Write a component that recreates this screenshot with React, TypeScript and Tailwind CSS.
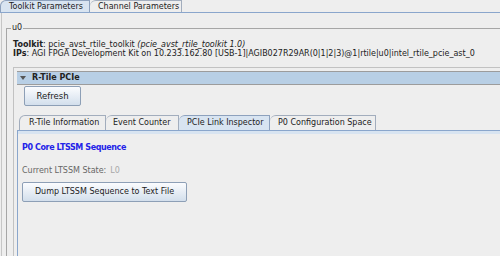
export default function App() {
  return (
    <div className="w-[500px] h-[256px] overflow-hidden bg-[#eeeeee] text-[8px] leading-[10px] text-[#333333] font-['DejaVu_Sans',sans-serif]">
      {/* Top tabs */}
      <div className="flex h-[12px] items-end">
        <div className="h-[12px] w-[90px] flex items-center pl-[8px] whitespace-nowrap bg-[#d8e4f1] border border-b-0 border-[#8da1bd] rounded-tl-[6px] text-[#222222]">
          Toolkit Parameters
        </div>
        <div className="h-[12px] w-[92px] flex items-center pl-[8px] whitespace-nowrap bg-[#eeeeee] border border-b-0 border-l-0 border-[#a2adbd] rounded-tl-[6px] text-[#222222]">
          Channel Parameters
        </div>
      </div>

      {/* Outer tab pane */}
      <div className="w-[540px] h-[244px] border-t border-[#8aa6cc] pl-[1px]">
        <div className="h-full border-l border-[#c6c6c6] pl-[4px] pt-[10px]">
          <fieldset className="w-[520px] h-[240px] border border-[#a6a6a6] pl-[6px]">
            <legend className="-ml-[2px] px-[1px] text-[#222222] leading-[10px]">u0</legend>

            <div className="mt-[7px] text-[#222222] leading-[9px]">
              <div className="whitespace-nowrap">
                <span className="font-bold">Toolkit</span>: pcie_avst_rtile_toolkit{" "}
                <span className="italic">(pcie_avst_rtile_toolkit 1.0)</span>
              </div>
              <div className="whitespace-nowrap">
                <span className="font-bold">IPs</span>: AGI FPGA Development Kit on 10.233.162.80
                [USB-1]|AGIB027R29AR(0|1|2|3)@1|rtile|u0|intel_rtile_pcie_ast_0
              </div>
            </div>

            {/* R-Tile PCIe panel */}
            <div className="mt-[9px] h-[200px] border border-[#c2c2c2] p-[3px]">
              <div className="h-[14px] flex items-center border-y border-[#9c9c9c] bg-[#b8cfe5] text-[#222222]">
                <svg width="6" height="4" viewBox="0 0 6 4" className="ml-[3px]">
                  <path d="M0 0 L6 0 L3 4 Z" fill="#555555" />
                </svg>
                <span className="ml-[6px] font-bold">R-Tile PCIe</span>
              </div>

              <button className="mt-[1px] ml-[7px] w-[57px] h-[20px] rounded-[2px] border border-[#8d9fb6] bg-gradient-to-b from-[#fbfcfe] to-[#d3dfec] text-[#222222] text-[8.5px]">
                Refresh
              </button>

              {/* Inner tabs */}
              <div className="mt-[9px] flex h-[15px] pl-[2px] text-[#222222] whitespace-nowrap">
                <div className="w-[87px] flex items-center pl-[9px] border border-b-0 border-[#a2adbd] rounded-tl-[6px]">
                  R-Tile Information
                </div>
                <div className="w-[73px] flex items-center pl-[7px] border border-b-0 border-l-0 border-[#a2adbd] rounded-tl-[6px]">
                  Event Counter
                </div>
                <div className="w-[91px] flex items-center pl-[8px] bg-[#d8e4f1] border border-b-0 border-l-0 border-[#8da1bd] rounded-tl-[6px]">
                  PCIe Link Inspector
                </div>
                <div className="w-[106px] flex items-center pl-[8px] border border-b-0 border-l-0 border-[#a2adbd] rounded-tl-[6px]">
                  P0 Configuration Space
                </div>
              </div>

              <div className="h-[140px] border-t border-l border-[#8aa6cc]">
                <div className="h-[3px] bg-[#d8e4f1]" />
                <div className="pl-[4px]">
                  <div className="mt-[9px] font-bold tracking-[-0.4px] text-[#2323e8]">P0 Core LTSSM Sequence</div>
                  <div className="mt-[13px] text-[#666666]">
                    Current LTSSM State:<span className="ml-[4px] text-[#a8a8a8]">L0</span>
                  </div>
                  <button className="mt-[6px] w-[165px] h-[20px] rounded-[2px] border border-[#8d9fb6] bg-gradient-to-b from-[#fbfcfe] to-[#d3dfec] text-[#222222]">
                    Dump LTSSM Sequence to Text File
                  </button>
                </div>
              </div>
            </div>
          </fieldset>
        </div>
      </div>
    </div>
  );
}
